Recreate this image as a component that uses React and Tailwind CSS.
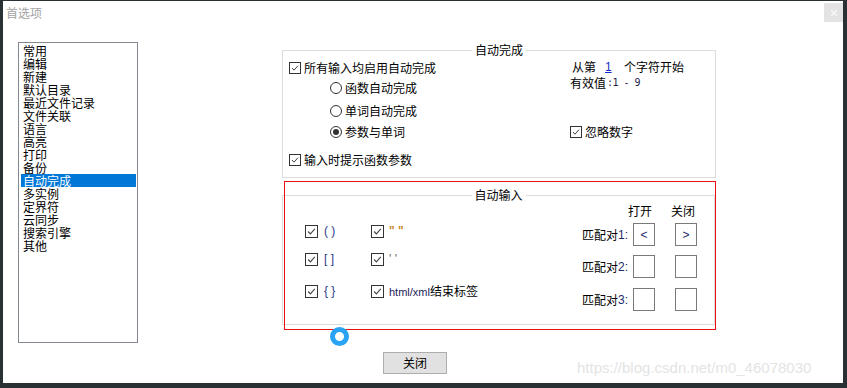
import React from 'react';

const ITEMS = ['常用', '编辑', '新建', '默认目录', '最近文件记录', '文件关联', '语言', '高亮', '打印', '备份', '自动完成', '多实例', '定界符', '云同步', '搜索引擎', '其他'];

function Mark() {
  return (
    <svg viewBox="0 0 12 12" className="w-full h-full">
      <polyline points="2.3,6 4.8,8.6 9.6,3.2" fill="none" stroke="#444" strokeWidth="1.2" />
    </svg>
  );
}

// petite case a cocher style Windows 10
function Check({ big }) {
  return (
    <span className={big
      ? 'shrink-0 w-[13px] h-[13px] border border-[#333] bg-white flex'
      : 'shrink-0 w-[12px] h-[12px] border border-[#333] bg-white flex'}>
      <Mark />
    </span>
  );
}

function Radio({ on }) {
  return (
    <span className="shrink-0 w-[12px] h-[12px] rounded-full border border-[#333] bg-white flex items-center justify-center">
      {on && <span className="w-[6px] h-[6px] rounded-full bg-[#333]" />}
    </span>
  );
}

function PairRow({ n, open, close, mt }) {
  return (
    <div className={'flex items-center ' + mt}>
      <span className="w-[44px] flex justify-end whitespace-nowrap text-[12px] leading-[14px]">
        <span>匹配对</span><span className="font-['Liberation_Sans',sans-serif] text-[#1a2a6a]">{n}:</span>
      </span>
      <span className="ml-[5px] w-[22px] h-[23px] border border-[#7a7a7a] flex items-center justify-center font-['Liberation_Sans',sans-serif] text-[12px] text-[#1a2a6a]">{open}</span>
      <span className="ml-[20px] w-[22px] h-[23px] border border-[#7a7a7a] flex items-center justify-center font-['Liberation_Sans',sans-serif] text-[12px] text-[#1a2a6a]">{close}</span>
    </div>
  );
}

export default function App() {
  return (
    <div className="w-[847px] h-[388px] bg-[#293134] pt-[1px] pl-[3px] pr-[4px] pb-[5px]">
      <div className="relative w-full h-full bg-white flex flex-col text-black font-['Noto_Sans_CJK_SC','Noto_Sans',sans-serif]">
        {/* barre de titre */}
        <div className="h-[24px] flex justify-between items-start">
          <span className="pl-[3px] pt-[5px] text-[12px] leading-[14px] text-[#a3a3a3]">首选项</span>
          <span className="mt-[2px] w-[19px] h-[19px] bg-[#e3e3e3] flex items-center justify-center">
            <svg viewBox="0 0 10 10" className="w-[8px] h-[8px]">
              <path d="M1.5 1.5 L8.5 8.5 M8.5 1.5 L1.5 8.5" stroke="#f7f7f7" strokeWidth="2" />
            </svg>
          </span>
        </div>

        <div className="flex items-start pt-[17px]">
          {/* liste des categories */}
          <div className="ml-[15px] w-[120px] h-[301px] border border-[#828790] pt-[1px] px-[1px]">
            {ITEMS.map((it) => (
              <div
                key={it}
                className={it === '自动完成'
                  ? 'h-[13px] ml-[1px] pl-[2px] text-[12px] leading-[13px] bg-[#0078d7] text-white'
                  : 'h-[13px] ml-[1px] pl-[2px] text-[12px] leading-[13px]'}
              >
                {it}
              </div>
            ))}
          </div>

          <div className="ml-[144px] mt-[8px] w-[434px] flex flex-col">
            {/* groupe auto-completion */}
            <div className="relative h-[128px] border border-[#dcdcdc] flex text-[12px] leading-[14px]">
              <span className="absolute left-1/2 -translate-x-1/2 top-[-8px] bg-white px-[3px]">自动完成</span>
              <div className="w-[287px] pl-[6px] pt-[7px] flex flex-col">
                <div className="h-[20px] flex items-center"><Check /><span className="ml-[3px]">所有输入均启用自动完成</span></div>
                <div className="h-[20px] flex items-center pl-[41px]"><Radio /><span className="ml-[3px]">函数自动完成</span></div>
                <div className="h-[20px] mt-[3px] flex items-center pl-[41px]"><Radio /><span className="ml-[3px]">单词自动完成</span></div>
                <div className="h-[20px] mt-[1px] flex items-center pl-[41px]"><Radio on /><span className="ml-[3px]">参数与单词</span></div>
                <div className="h-[20px] mt-[8px] flex items-center"><Check /><span className="ml-[3px]">输入时提示函数参数</span></div>
              </div>
              <div className="pt-[7px] flex flex-col">
                <div className="h-[18px] pl-[2px] flex items-center">
                  <span>从第</span>
                  <span className="ml-[9px] w-[19px] font-['Liberation_Sans',sans-serif] text-[#1530c8] underline">1</span>
                  <span>个字符开始</span>
                </div>
                <div className="h-[14px] flex items-center">
                  <span>有效值</span>
                  <span className="ml-[1px] font-['DejaVu_Sans_Mono',monospace] text-[10px] text-[#1c1c4a] tracking-[-0.5px]">:1 - 9</span>
                </div>
                <div className="h-[20px] mt-[32px] flex items-center"><Check /><span className="ml-[3px]">忽略数字</span></div>
              </div>
            </div>

            {/* groupe auto-saisie */}
            <div className="relative mt-[17px]">
              <div className="relative w-[433px] h-[130px] border border-[#dcdcdc] flex text-[12px] leading-[14px]">
                <span className="absolute left-1/2 -translate-x-1/2 top-[-8px] bg-white px-[3px]">自动输入</span>
                <div className="pl-[22px] pt-[25px] flex flex-col">
                  <div className="h-[20px] flex items-center">
                    <div className="w-[66px] flex items-center"><Check big /><span className="ml-[6px] font-['Liberation_Sans',sans-serif] text-[#2a3a8a]">( )</span></div>
                    <Check big /><span className="ml-[5px] font-['Liberation_Sans',sans-serif] font-bold text-[#c98a2a]">" "</span>
                  </div>
                  <div className="h-[20px] mt-[8px] flex items-center">
                    <div className="w-[66px] flex items-center"><Check big /><span className="ml-[6px] font-['Liberation_Sans',sans-serif] text-[#2a3a8a]">[ ]</span></div>
                    <Check big /><span className="ml-[5px] font-['Liberation_Sans',sans-serif] text-[#6a6a6a]">' '</span>
                  </div>
                  <div className="h-[20px] mt-[12px] flex items-center">
                    <div className="w-[66px] flex items-center"><Check big /><span className="ml-[6px] font-['Liberation_Sans',sans-serif] text-[#2a3a8a]">{'{ }'}</span></div>
                    <Check big />
                    <span className="ml-[5px]">
                      <span className="font-['Liberation_Sans',sans-serif] text-[11px] text-[#1c1c5a]">html/xml</span>结束标签
                    </span>
                  </div>
                </div>
                <div className="ml-auto pr-[17px] pt-[5px] flex flex-col">
                  <div className="h-[20px] flex items-center">
                    <span className="ml-[44px]">打开</span>
                    <span className="ml-[19px]">关闭</span>
                  </div>
                  <PairRow n="1" open="<" close=">" mt="mt-[2px]" />
                  <PairRow n="2" open="" close="" mt="mt-[9px]" />
                  <PairRow n="3" open="" close="" mt="mt-[10px]" />
                </div>
              </div>
              {/* cadre rouge d'annotation */}
              <div className="absolute left-[2px] top-[-14px] w-[432px] h-[149px] border border-[#e81010]" />
            </div>

            <button className="mt-[27px] ml-[101px] w-[64px] h-[22px] border border-[#adadad] bg-[#e1e1e1] text-[12px] leading-[14px]">
              关闭
            </button>
          </div>
        </div>

        {/* curseur de chargement */}
        <div className="absolute left-[327px] top-[326px] w-[19px] h-[19px] rounded-full border-[5px] border-[#29a3f3]" />

        <span className="absolute left-[574px] top-[359px] font-['Liberation_Sans',sans-serif] text-[15px] leading-[15px] text-[#e4e4e4]">
          https://blog.csdn.net/m0_46078030
        </span>
      </div>
    </div>
  );
}
